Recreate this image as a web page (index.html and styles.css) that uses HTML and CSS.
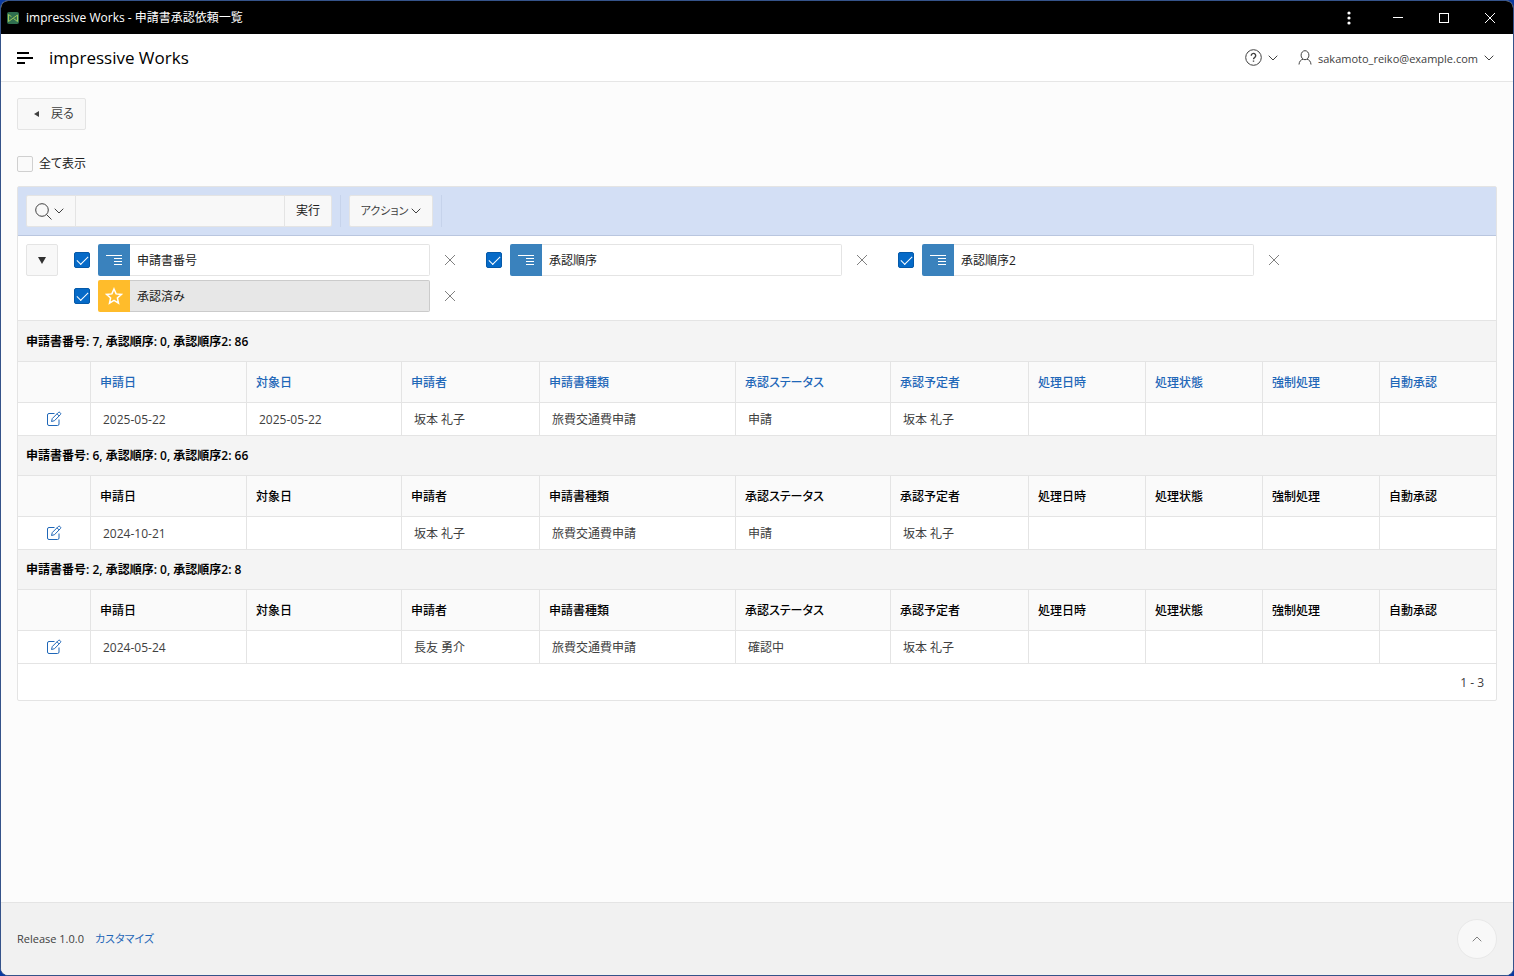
FILE: index.html
```html
<!DOCTYPE html>
<html lang="ja">
<head>
  <meta charset="UTF-8">
  <meta name="viewport" content="width=device-width, initial-scale=1.0">
  <title>impressive Works - 申請書承認依頼一覧</title>
  <link rel="stylesheet" href="styles.css">
</head>
<body>
  <svg class="sprite" aria-hidden="true">
    <symbol id="i-down" viewBox="0 0 10 6"><path d="M.7.7 5 5 9.3.7"/></symbol>
    <symbol id="i-up" viewBox="0 0 10 6"><path d="M.7 5.3 5 1l4.3 4.3"/></symbol>
    <symbol id="i-close" viewBox="0 0 12 12"><path d="M1 1l10 10M11 1 1 11"/></symbol>
    <symbol id="i-break" viewBox="0 0 18 14"><path d="M1 2.500h16M9 5.500h8M9 8.500h8M9 11.500h8"/></symbol>
    <symbol id="i-edit" viewBox="0 0 16 16"><path d="M8.500 2.500H3A1.500 1.500 0 0 0 1.500 4v9A1.500 1.500 0 0 0 3 14.500h8.500A1.500 1.500 0 0 0 13 13V8.500M5.500 10.500l.8-3L12.300 1.500a1.200 1.200 0 0 1 1.700 0l.4.4a1.200 1.200 0 0 1 0 1.700L8.500 9.700zM11 2.800l2.200 2.200"/></symbol>
  </svg>

  <div class="window">
    <div class="titlebar">
      <svg class="app-icon" width="12" height="12" viewBox="0 0 12 12">
        <rect width="12" height="12" rx="2" fill="#2f6f4f"/>
        <path d="M1.500 2.500v7l9-6.500v6.500L6.500 6.500M1.500 2.500l3 2.200" fill="none" stroke="#9cc75c"/>
      </svg>
      <span class="titlebar-text">impressive Works - 申請書承認依頼一覧</span>
      <div class="window-buttons">
        <button type="button" aria-label="メニュー"><svg width="4" height="14" viewBox="0 0 4 14" fill="#fff"><circle cx="2" cy="2" r="1.600"/><circle cx="2" cy="7" r="1.600"/><circle cx="2" cy="12" r="1.600"/></svg></button>
        <button type="button" aria-label="最小化"><svg class="line" width="10" height="10" viewBox="0 0 10 10"><path d="M0 4.500h10"/></svg></button>
        <button type="button" aria-label="最大化"><svg class="line" width="10" height="10" viewBox="0 0 10 10"><rect x=".5" y=".5" width="9" height="9"/></svg></button>
        <button type="button" aria-label="閉じる"><svg class="line" width="12" height="12"><use href="#i-close"/></svg></button>
      </div>
    </div>

    <header class="header">
      <button type="button" class="nav-toggle" aria-label="ナビゲーション"><svg width="16" height="12" viewBox="0 0 16 12" fill="none" stroke="#000" stroke-width="2"><path d="M0 1h12M0 6h16M0 11h8"/></svg></button>
      <a class="logo" href="#">impressive Works</a>
      <div class="header-nav">
        <button type="button" aria-label="ヘルプ">
          <svg class="line" width="17" height="17" viewBox="0 0 17 17"><circle cx="8.500" cy="8.500" r="7.800"/><path d="M6.300 6.700a2.200 2.200 0 1 1 3.500 1.700c-.8.6-1.300.9-1.300 1.900M8.500 11.400v1.400" stroke-width="1.400"/></svg>
          <svg class="line" width="10" height="6"><use href="#i-down"/></svg>
        </button>
        <button type="button">
          <svg class="line" width="14" height="15" viewBox="0 0 14 15"><ellipse cx="7" cy="5.200" rx="3.900" ry="4.500"/><path d="M1 14.500c.2-3 1.800-4.800 4-5.300M13 14.500c-.2-3-1.800-4.800-4-5.300"/></svg>
          <span class="user-name">sakamoto_reiko@example.com</span>
          <svg class="line" width="10" height="6"><use href="#i-down"/></svg>
        </button>
      </div>
    </header>

    <main class="main">
      <button type="button" class="btn back-btn"><span class="tri-left"></span>戻る</button>

      <label class="show-all"><input type="checkbox" class="check">全て表示</label>

      <section class="report">
        <div class="toolbar">
          <div class="search-group">
            <button type="button" class="btn search-col" aria-label="検索列">
              <svg class="line" width="17" height="17" viewBox="0 0 17 17"><circle cx="7" cy="7" r="6.300"/><path d="M11.500 11.500l5 5"/></svg>
              <svg class="line" width="10" height="6"><use href="#i-down"/></svg>
            </button>
            <input type="text" class="search-input" aria-label="検索">
            <button type="button" class="btn go-btn">実行</button>
          </div>
          <div class="action-group">
            <button type="button" class="btn action-btn">アクション<svg class="line" width="10" height="6"><use href="#i-down"/></svg></button>
          </div>
        </div>

        <div class="controls">
          <button type="button" class="btn collapse-btn" aria-label="レポート設定"><span class="tri-down"></span></button>
          <ul class="control-list">
            <li class="control">
              <input type="checkbox" class="check" aria-label="申請書番号" checked>
              <span class="control-icon"><svg class="line" width="18" height="14"><use href="#i-break"/></svg></span>
              <button type="button" class="control-name">申請書番号</button>
              <button type="button" class="remove" aria-label="削除"><svg class="line" width="12" height="12"><use href="#i-close"/></svg></button>
            </li>
            <li class="control">
              <input type="checkbox" class="check" aria-label="承認順序" checked>
              <span class="control-icon"><svg class="line" width="18" height="14"><use href="#i-break"/></svg></span>
              <button type="button" class="control-name">承認順序</button>
              <button type="button" class="remove" aria-label="削除"><svg class="line" width="12" height="12"><use href="#i-close"/></svg></button>
            </li>
            <li class="control">
              <input type="checkbox" class="check" aria-label="承認順序2" checked>
              <span class="control-icon"><svg class="line" width="18" height="14"><use href="#i-break"/></svg></span>
              <button type="button" class="control-name">承認順序2</button>
              <button type="button" class="remove" aria-label="削除"><svg class="line" width="12" height="12"><use href="#i-close"/></svg></button>
            </li>
            <li class="control highlight">
              <input type="checkbox" class="check" aria-label="承認済み" checked>
              <span class="control-icon"><svg class="line" width="18" height="18" viewBox="0 0 18 18"><path d="M9 2l2.100 4.900 5.200.5-3.900 3.500 1.100 5.200L9 13.400l-4.500 2.700 1.100-5.200-3.900-3.500 5.200-.5z"/></svg></span>
              <button type="button" class="control-name">承認済み</button>
              <button type="button" class="remove" aria-label="削除"><svg class="line" width="12" height="12"><use href="#i-close"/></svg></button>
            </li>
          </ul>
        </div>

        <table class="report-table">
          <colgroup>
            <col class="w-edit"><col class="w-apply"><col class="w-date"><col class="w-name"><col class="w-type"><col class="w-date"><col class="w-name"><col class="w-flag"><col class="w-flag"><col class="w-flag"><col class="w-last">
          </colgroup>
          <tbody>
            <tr class="group"><th colspan="11">申請書番号: 7, 承認順序: 0, 承認順序2: 86</th></tr>
            <tr class="head">
              <th></th>
              <th><a href="#">申請日</a></th>
              <th><a href="#">対象日</a></th>
              <th><a href="#">申請者</a></th>
              <th><a href="#">申請書種類</a></th>
              <th><a href="#">承認ステータス</a></th>
              <th><a href="#">承認予定者</a></th>
              <th><a href="#">処理日時</a></th>
              <th><a href="#">処理状態</a></th>
              <th><a href="#">強制処理</a></th>
              <th><a href="#">自動承認</a></th>
            </tr>
            <tr>
              <td class="edit"><a href="#" aria-label="編集"><svg class="line" width="16" height="16"><use href="#i-edit"/></svg></a></td>
              <td>2025-05-22</td>
              <td>2025-05-22</td>
              <td>坂本 礼子</td>
              <td>旅費交通費申請</td>
              <td>申請</td>
              <td>坂本 礼子</td>
              <td></td>
              <td></td>
              <td></td>
              <td></td>
            </tr>
          </tbody>
          <tbody>
            <tr class="group"><th colspan="11">申請書番号: 6, 承認順序: 0, 承認順序2: 66</th></tr>
            <tr class="head">
              <th></th>
              <th>申請日</th>
              <th>対象日</th>
              <th>申請者</th>
              <th>申請書種類</th>
              <th>承認ステータス</th>
              <th>承認予定者</th>
              <th>処理日時</th>
              <th>処理状態</th>
              <th>強制処理</th>
              <th>自動承認</th>
            </tr>
            <tr>
              <td class="edit"><a href="#" aria-label="編集"><svg class="line" width="16" height="16"><use href="#i-edit"/></svg></a></td>
              <td>2024-10-21</td>
              <td></td>
              <td>坂本 礼子</td>
              <td>旅費交通費申請</td>
              <td>申請</td>
              <td>坂本 礼子</td>
              <td></td>
              <td></td>
              <td></td>
              <td></td>
            </tr>
          </tbody>
          <tbody>
            <tr class="group"><th colspan="11">申請書番号: 2, 承認順序: 0, 承認順序2: 8</th></tr>
            <tr class="head">
              <th></th>
              <th>申請日</th>
              <th>対象日</th>
              <th>申請者</th>
              <th>申請書種類</th>
              <th>承認ステータス</th>
              <th>承認予定者</th>
              <th>処理日時</th>
              <th>処理状態</th>
              <th>強制処理</th>
              <th>自動承認</th>
            </tr>
            <tr>
              <td class="edit"><a href="#" aria-label="編集"><svg class="line" width="16" height="16"><use href="#i-edit"/></svg></a></td>
              <td>2024-05-24</td>
              <td></td>
              <td>長友 勇介</td>
              <td>旅費交通費申請</td>
              <td>確認中</td>
              <td>坂本 礼子</td>
              <td></td>
              <td></td>
              <td></td>
              <td></td>
            </tr>
          </tbody>
        </table>
        <div class="pagination">1 - 3</div>
      </section>
    </main>

    <footer class="footer">
      <span>Release 1.0.0</span>
      <a href="#">カスタマイズ</a>
      <button type="button" class="to-top" aria-label="トップへ戻る"><svg class="line" width="10" height="6"><use href="#i-up"/></svg></button>
    </footer>
  </div>
</body>
</html>
```

FILE: styles.css
```css
* {
  box-sizing: border-box;
}
body {
  margin: 0;
  background: #0a3aa0;
  color: #404040;
  font-family: "Open Sans", "Noto Sans CJK JP", sans-serif;
  font-size: 12px;
  font-feature-settings: "palt";
  line-height: 16px;
}
button, input {
  font: inherit;
  font-feature-settings: inherit;
  color: inherit;
}
button {
  display: flex;
  align-items: center;
  justify-content: center;
  padding: 0;
  border: 0;
  background: none;
}
a {
  color: #1f67b8;
  text-decoration: none;
}
.sprite {
  display: none;
}
.line {
  fill: none;
  stroke: currentColor;
}

.window {
  display: flex;
  flex-direction: column;
  min-height: 100vh;
  border: 1px solid #35538a;
  border-radius: 8px;
  background: #fcfcfc;
  overflow: hidden;
}
.titlebar {
  display: flex;
  align-items: center;
  height: 33px;
  padding-left: 6px;
  background: #000;
  color: #fff;
}
.titlebar-text {
  margin-left: 7px;
}
.window-buttons {
  display: flex;
  margin-left: auto;
}
.window-buttons button {
  width: 46px;
  height: 33px;
}
.window-buttons button:first-child {
  width: 52px;
}

.header {
  display: flex;
  align-items: center;
  height: 48px;
  padding: 0 19px 0 16px;
  border-bottom: 1px solid #e6e6e6;
  background: #fff;
}
.logo {
  margin-left: 16px;
  color: #000;
  font-size: 17px;
  font-weight: 500;
  line-height: 24px;
}
.header-nav {
  display: flex;
  gap: 20px;
  margin-left: auto;
}
.header-nav button {
  gap: 6px;
}
.user-name {
  padding-top: 2px;
  font-size: 11px;
}

.main {
  flex: 1;
  padding: 16px;
}
.btn {
  height: 32px;
  border: 1px solid #e4e4e4;
  border-radius: 2px;
  background: #f8f8f8;
}
.back-btn {
  gap: 12px;
  padding: 0 11px 0 16px;
}
.tri-left {
  border: 3px solid transparent;
  border-right: 5px solid #404040;
  border-left: 0;
}
.tri-down {
  border: 4px solid transparent;
  border-top: 7px solid #303030;
  border-bottom: 0;
}
.show-all {
  display: flex;
  align-items: center;
  gap: 6px;
  width: max-content;
  margin: 26px 0 14px;
  color: #202020;
}
.check {
  display: grid;
  place-items: center;
  appearance: none;
  flex: none;
  width: 16px;
  height: 16px;
  margin: 0;
  border: 1px solid #d0d0d0;
  border-radius: 2px;
  background: #fafafa;
}
.check:checked {
  border-color: #0559a8;
  background: #056ac8;
}
.check:checked::after {
  content: "";
  width: 10px;
  height: 5px;
  margin-bottom: 3px;
  border: solid #fff;
  border-width: 0 0 1px 1px;
  transform: rotate(-45deg);
}

.report {
  border: 1px solid #e4e4e4;
  border-radius: 2px;
  background: #fff;
}
.toolbar {
  display: flex;
  padding: 8px;
  border-bottom: 1px solid #b9c6df;
  background: #d3dff5;
}
.search-group {
  display: flex;
}
.search-col {
  gap: 2px;
  width: 50px;
  padding-right: 3px;
  border-radius: 2px 0 0 2px;
}
.search-input {
  width: 208px;
  height: 32px;
  padding: 0 8px;
  border: solid #e4e4e4;
  border-width: 1px 0;
  background: #f8f8f8;
}
.go-btn {
  width: 48px;
  border-radius: 0 2px 2px 0;
  color: #202020;
}
.action-group {
  display: flex;
  margin-left: 8px;
  padding: 0 8px;
  border: solid #c6d3eb;
  border-width: 0 1px;
}
.action-btn {
  gap: 3px;
  width: 84px;
  font-size: 11px;
}

.controls {
  display: flex;
  gap: 16px;
  padding: 8px;
  border-bottom: 1px solid #e4e4e4;
}
.collapse-btn {
  width: 32px;
}
.control-list {
  display: flex;
  flex: 1;
  flex-wrap: wrap;
  row-gap: 4px;
  margin: 0;
  padding: 0;
  list-style: none;
}
.control {
  display: flex;
  align-items: center;
  width: 412px;
  color: #202020;
}
.control-icon {
  display: flex;
  align-items: center;
  justify-content: center;
  width: 32px;
  height: 32px;
  margin-left: 8px;
  border-radius: 2px 0 0 2px;
  background: #3a82bd;
  color: #fff;
}
.control-name {
  justify-content: flex-start;
  width: 300px;
  height: 32px;
  padding: 2px 7px 0;
  border: 1px solid #e4e4e4;
  border-left: 0;
  border-radius: 0 2px 2px 0;
}
.highlight .control-icon {
  background: #ffbc2b;
}
.highlight .control-icon .line {
  stroke-width: 1.5;
}
.highlight .control-name {
  border-color: #cbcbcb;
  background: #e7e7e7;
}
.remove {
  width: 40px;
  height: 32px;
  color: #808080;
}

.report-table {
  width: 100%;
  table-layout: fixed;
  border-collapse: separate;
  border-spacing: 0;
}
.w-edit { width: 73px; }
.w-apply { width: 156px; }
.w-date { width: 155px; }
.w-name { width: 138px; }
.w-type { width: 196px; }
.w-flag { width: 117px; }
.w-last { width: 116px; }
.report-table th,
.report-table td {
  border: solid #e4e4e4;
  border-width: 0 1px 1px 0;
  text-align: left;
}
.report-table th:last-child,
.report-table td:last-child {
  border-right: 0;
}
.report-table td {
  height: 33px;
  padding: 2px 12px 0;
}
.report-table th {
  height: 41px;
  padding: 2px 9px 0;
  background: #fafafa;
  color: #000;
  font-weight: 500;
}
.report-table .group th {
  height: 40px;
  padding: 1px 8px 0;
  background: #f4f4f4;
  font-weight: 600;
}
.report-table tbody:first-of-type .group th {
  height: 41px;
}
.report-table .edit {
  padding: 0;
  text-align: center;
}
.edit svg {
  display: block;
  margin: 0 auto;
}
.pagination {
  padding: 11px 12px 9px;
  text-align: right;
}

.footer {
  display: flex;
  align-items: center;
  gap: 11px;
  padding: 16px;
  border-top: 1px solid #e4e4e4;
  background: #f1f1f1;
  font-size: 11px;
}
.to-top {
  width: 40px;
  height: 40px;
  margin-left: auto;
  border: 1px solid #e8e8e8;
  border-radius: 50%;
  background: #f8f8f8;
  color: #808080;
}
```
